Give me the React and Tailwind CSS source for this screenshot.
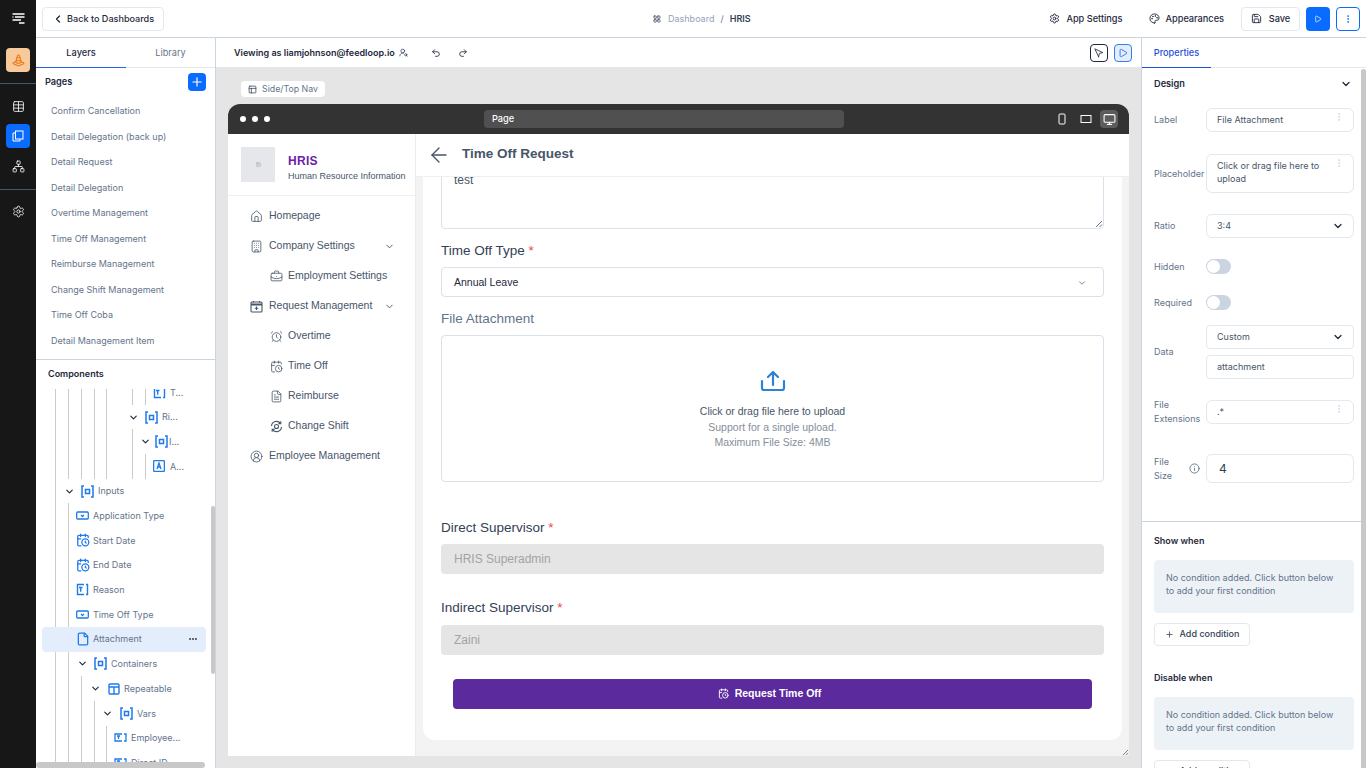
import React from 'react';
import { ChevronLeft, ChevronDown, Plus, Table, Network, Settings, Save, Play, EllipsisVertical, Ellipsis, Palette, UserRoundSearch, Undo2, Redo2, Navigation, PanelsTopLeft, Monitor, ArrowLeft, House, Building, BriefcaseBusiness, CalendarClock, AlarmClock, FileText, CircleUserRound, Info, LayoutGrid, TrafficCone, File, Image } from 'lucide-react';

const pages = ['Confirm Cancellation','Detail Delegation (back up)','Detail Request','Detail Delegation','Overtime Management','Time Off Management','Reimburse Management','Change Shift Management','Time Off Coba','Detail Management Item'];

const B = '#1f7aec';
function Bracket() {
  return <svg width="13" height="13" viewBox="0 0 13 13" fill="none" stroke={B} strokeWidth="1.5"><path d="M3 1H1v11h2M10 1h2v11h-2"/><rect x="4.5" y="4.5" width="4" height="4"/></svg>;
}
function SelectI() {
  return <svg width="13" height="13" viewBox="0 0 13 13" fill="none" stroke={B} strokeWidth="1.3"><rect x="0.7" y="3" width="11.6" height="7" rx="1"/><path d="M5 6l1.5 1.5L8 6"/></svg>;
}
function TextI() {
  return <svg width="13" height="13" viewBox="0 0 13 13" fill="none" stroke={B} strokeWidth="1.4"><path d="M8 1.5H1.5v10H8M10 1.5h1.5v10H10"/><path d="M3 4.5h3.5M4.7 4.5v4.2"/></svg>;
}
function TextW() {
  return <svg width="13" height="13" viewBox="0 0 13 13" fill="none" stroke={B} strokeWidth="1.3"><path d="M8 3H1v7h7M10 3h2v7h-2"/><path d="M3 5h3M4.5 5v3"/></svg>;
}
function AI() {
  return <svg width="12" height="12" viewBox="0 0 12 12" fill="none" stroke={B} strokeWidth="1.3"><rect x="0.6" y="0.6" width="10.8" height="10.8" rx="1"/><path d="M4 9l2-6 2 6M4.8 7h2.4"/></svg>;
}
function Repeat() {
  return <svg width="12" height="12" viewBox="0 0 12 12" fill="none" stroke={B} strokeWidth="1.4"><rect x="1" y="1" width="10" height="10" rx="1"/><path d="M1 4h10M6 4v7"/></svg>;
}
const Cal = () => <CalendarClock size={14} color={B} strokeWidth={2.2} />;
const Fi = () => <File size={14} color={B} strokeWidth={2.2} />;

function ReqIcon({ size = 13 }) {
  return <svg width={size} height={size} viewBox="0 0 13 13" fill="none" stroke="#475569" strokeWidth="1.1"><rect x="1" y="2" width="11" height="10" rx="1"/><path d="M1 4.5h11" strokeWidth="2"/><path d="M3.5 1v1.5M9.5 1v1.5M6.5 6.5v3.5M4.8 8.3h3.4"/></svg>;
}
function ShiftIcon({ size = 13 }) {
  return <svg width={size} height={size} viewBox="0 0 13 13" fill="none" stroke="#475569" strokeWidth="1.1"><path d="M1.5 6A5 5 0 0 1 10.5 3.4M11.5 7A5 5 0 0 1 2.5 9.6"/><path d="M10.8 1.2v2.4H8.4M2.2 11.8V9.4h2.4"/><circle cx="6.5" cy="6.5" r="2"/></svg>;
}

const G0 = [55,68,81,94,106];
const tree = [
  { g:[...G0,132,145], ix:153, tx:170, Icon:TextI, t:'T...' },
  { g:G0, cx:133, ix:145, tx:162, Icon:Bracket, t:'Ri...' },
  { g:[...G0,132], cx:145, ix:155, tx:169, Icon:Bracket, t:'I...' },
  { g:[...G0,132,145], ix:153, tx:170, Icon:AI, t:'A...' },
  { g:[55], cx:69, ix:81, tx:98, Icon:Bracket, t:'Inputs' },
  { g:[55,68], ix:76, tx:93, Icon:SelectI, t:'Application Type' },
  { g:[55,68], ix:76, tx:93, Icon:Cal, t:'Start Date' },
  { g:[55,68], ix:76, tx:93, Icon:Cal, t:'End Date' },
  { g:[55,68], ix:76, tx:93, Icon:TextI, t:'Reason' },
  { g:[55,68], ix:76, tx:93, Icon:SelectI, t:'Time Off Type' },
  { g:[55,68], ix:76, tx:93, Icon:Fi, t:'Attachment', active:true },
  { g:[55,68], cx:82, ix:94, tx:111, Icon:Bracket, t:'Containers' },
  { g:[55,68,81], cx:95, ix:108, tx:124, Icon:Repeat, t:'Repeatable' },
  { g:[55,68,81,94], cx:107, ix:120, tx:137, Icon:Bracket, t:'Vars' },
  { g:G0, ix:114, tx:131, Icon:TextW, t:'Employee...' },
  { g:G0, ix:114, tx:131, Icon:TextW, t:'Direct ID' },
];

function TreeRow({ r }) {
  const X0 = 36;
  return (
    <div className="relative h-[24.7px] flex items-center shrink-0">
      {r.g.map(x => <span key={x} className="absolute top-0 bottom-0 w-px bg-[#cbcbcb]" style={{ left: x - X0 }} />)}
      {r.active && (
        <div className="absolute left-[6px] right-[9px] top-0 h-[25px] rounded bg-[#e3edfb] flex items-center justify-end pr-2">
          <Ellipsis size={10} color="#334155" strokeWidth={3} />
        </div>
      )}
      {r.cx && <span className="absolute" style={{ left: r.cx - X0 - 5 }}><ChevronDown size={11} color="#1e293b" strokeWidth={2.5} /></span>}
      <span className="absolute flex" style={{ left: r.ix - X0 }}><r.Icon /></span>
      <span className="absolute text-[9px] text-[#64748b] whitespace-nowrap" style={{ left: r.tx - X0 }}>{r.t}</span>
    </div>
  );
}

function LeftPanel() {
  return (
    <aside className="w-[180px] shrink-0 border-r border-[#cbd5e1] flex flex-col relative overflow-hidden">
      <div className="h-[30px] flex border-b border-[#e2e8f0] text-[9.2px] shrink-0">
        <div className="w-[90px] -mb-px border-b border-[#2563eb] flex items-center justify-center text-[#1e293b] font-medium">Layers</div>
        <div className="flex-1 flex items-center justify-center text-[#64748b]">Library</div>
      </div>
      <div className="flex items-center justify-between pl-[9px] pr-[9px] pt-[5px] shrink-0">
        <span className="text-[9.2px] font-semibold text-[#1e293b]">Pages</span>
        <span className="w-[18px] h-[18px] bg-[#0a6cff] rounded flex items-center justify-center"><Plus size={14} color="white" /></span>
      </div>
      <div className="pl-[15px] pt-[7px] h-[269px] border-b border-[#cbd5e1] shrink-0 box-border">
        {pages.map(p => <div key={p} className="h-[25.55px] flex items-center text-[9px] text-[#64748b] whitespace-nowrap">{p}</div>)}
      </div>
      <div className="pl-3 pt-[7px] text-[9px] font-semibold text-[#1e293b] shrink-0 h-[29px]">Components</div>
      <div className="flex flex-col flex-1 overflow-hidden">
        <div className="flex flex-col -mt-[9px]">
          {tree.map(r => <TreeRow key={r.t} r={r} />)}
        </div>
      </div>
      <span className="absolute right-0 top-[468px] w-[4px] h-[168px] bg-[#c8c8c8] rounded" />
      <span className="absolute left-0 bottom-0 w-[169px] h-[6px] bg-[#c8c8c8] rounded" />
    </aside>
  );
}

function NavRow({ Icon, t, sub, chev }) {
  return (
    <div className={`h-[30px] flex items-center text-[#475569] text-[10.5px] whitespace-nowrap ${sub ? 'pl-[42px]' : 'pl-[22px]'}`}>
      <Icon size={13} strokeWidth={1.5} color="#475569" />
      <span className={sub ? 'ml-[5px]' : 'ml-[6px]'}>{t}</span>
      {chev && <span className="ml-auto mr-[20px]"><ChevronDown size={11} color="#475569" /></span>}
    </div>
  );
}

function FieldLabel({ children, req }) {
  return <div className="text-[13.5px] text-[#334155] leading-[18px] pt-px -mb-px">{children}{req && <span className="text-[#ef4444]"> *</span>}</div>;
}

function Preview() {
  return (
    <div className="ml-3 mt-[7px] w-[901px] h-[652px] rounded-t-xl overflow-hidden flex flex-col bg-[#f3f3f3] relative font-['Liberation_Sans',sans-serif]">
      <div className="h-[30px] bg-[#333333] flex items-center shrink-0 pl-3 pr-[11px]">
        <div className="flex gap-[6px]">
          <span className="w-[6px] h-[6px] rounded-full bg-white" />
          <span className="w-[6px] h-[6px] rounded-full bg-white" />
          <span className="w-[6px] h-[6px] rounded-full bg-white" />
        </div>
        <div className="ml-[214px] w-[360px] h-[18px] rounded bg-[#505050] text-white text-[9.2px] font-medium flex items-center pl-2 font-['Inter',sans-serif]">Page</div>
        <div className="ml-auto flex items-center text-white">
          <svg width="12" height="12" viewBox="0 0 12 12" fill="none" stroke="white" className="mr-[12px]"><rect x="3" y="1" width="6" height="10" rx="1"/></svg>
          <svg width="12" height="12" viewBox="0 0 12 12" fill="none" stroke="white" className="mr-[8px]"><rect x="1" y="2.5" width="10" height="7"/></svg>
          <span className="w-[18px] h-[18px] rounded bg-[#5c5c5c] flex items-center justify-center"><Monitor size={13} color="white" /></span>
        </div>
      </div>
      <div className="flex flex-1 min-h-0">
        <div className="w-[188px] bg-white border-r border-[#ececec] shrink-0">
          <div className="h-[62px] border-b border-[#f0f0f0] flex items-center pl-[13px]">
            <div className="w-[34px] h-[35px] shrink-0 bg-[#e5e7eb] flex items-center justify-center"><Image size={5} color="#94a3b8" /></div>
            <div className="ml-[13px] pt-[6px]">
              <div className="text-[12px] font-bold text-[#6b21a8] leading-4 tracking-wide">HRIS</div>
              <div className="text-[9px] text-[#475569] leading-[14px] whitespace-nowrap">Human Resource Information</div>
            </div>
          </div>
          <div className="pt-[5px]">
            <NavRow Icon={House} t="Homepage" />
            <NavRow Icon={Building} t="Company Settings" chev />
            <NavRow Icon={BriefcaseBusiness} t="Employment Settings" sub />
            <NavRow Icon={ReqIcon} t="Request Management" chev />
            <NavRow Icon={AlarmClock} t="Overtime" sub />
            <NavRow Icon={CalendarClock} t="Time Off" sub />
            <NavRow Icon={FileText} t="Reimburse" sub />
            <NavRow Icon={ShiftIcon} t="Change Shift" sub />
            <NavRow Icon={CircleUserRound} t="Employee Management" />
          </div>
        </div>
        <div className="flex-1 flex flex-col min-w-0">
          <div className="h-[43px] bg-white border-b border-[#efefef] flex items-center pl-[11px] pb-[1px] shrink-0">
            <ArrowLeft size={24} color="#475569" strokeWidth={1.4} />
            <span className="ml-[11px] text-[13.5px] font-bold text-[#475569]">Time Off Request</span>
          </div>
          <div className="mx-[7px] bg-white rounded-b-xl h-[563px] overflow-hidden px-[18px] flex flex-col">
            <div className="-mt-[10px] h-[62px] border border-[#dbe1e8] rounded pl-3 pt-[5px] relative shrink-0">
              <div className="text-[12px] text-[#475569] leading-[16px] -mt-[1px]">test</div>
              <svg className="absolute right-0 bottom-0" width="8" height="8" viewBox="0 0 8 8" stroke="#64748b"><path d="M1 7l6-6M4.5 7L7 4.5"/></svg>
            </div>
            <div className="mt-[12px]"><FieldLabel req>Time Off Type</FieldLabel></div>
            <div className="mt-[8px] h-[30px] pt-px border border-[#dbe1e8] rounded flex items-center pl-3 pr-[16px] text-[10.5px] text-[#1e293b] shrink-0">
              Annual Leave<span className="ml-auto"><ChevronDown size={10} color="#64748b" /></span>
            </div>
            <div className="mt-[13px] -mb-px text-[13.5px] text-[#64748b] leading-[18px]">File Attachment</div>
            <div className="mt-[8px] h-[147px] border border-[#dbe1e8] rounded flex flex-col items-center pt-[34px] text-[10.5px] leading-[15.5px] text-[#868e9a] shrink-0">
              <svg width="26" height="22" viewBox="0 0 26 22" fill="none" stroke="#2f80d8" strokeWidth="2.2" strokeLinecap="round" strokeLinejoin="round">
                <path d="M2 11v7q0 2 2 2h18q2 0 2-2v-7M13 15V2M8 7l5-5 5 5" />
              </svg>
              <div className="mt-[12px] text-[#475569]">Click or drag file here to upload</div>
              <div>Support for a single upload.</div>
              <div>Maximum File Size: 4MB</div>
            </div>
            <div className="mt-[36px]"><FieldLabel req>Direct Supervisor</FieldLabel></div>
            <div className="mt-[8px] h-[30px] rounded bg-[#e5e5e5] flex items-center pl-[13px] text-[12px] text-[#a3a3a3] shrink-0">HRIS Superadmin</div>
            <div className="mt-[24px]"><FieldLabel req>Indirect Supervisor</FieldLabel></div>
            <div className="mt-[9px] h-[30px] rounded bg-[#e5e5e5] flex items-center pl-[13px] text-[12px] text-[#a3a3a3] shrink-0">Zaini</div>
            <div className="mt-[24px] mx-3 h-[30px] pb-px pr-[6px] rounded bg-[#5b2a9d] flex items-center justify-center text-white text-[10.5px] font-bold shrink-0">
              <CalendarClock size={11} color="white" className="mr-[6px]" />Request Time Off
            </div>
          </div>
        </div>
      </div>
      <svg className="absolute right-0 bottom-0" width="7" height="7" viewBox="0 0 8 8" stroke="#64748b"><path d="M1 7l6-6M4.5 7L7 4.5"/></svg>
    </div>
  );
}

function Center() {
  return (
    <main className="flex-1 min-w-0 flex flex-col bg-[#e5e5e5]">
      <div className="h-[30px] bg-white border-b border-[#e2e8f0] flex items-center pl-[18px] pr-[9px] shrink-0">
        <span className="text-[9px] font-semibold text-[#1e293b]">Viewing as liamjohnson@feedloop.io</span>
        <UserRoundSearch size={9} color="#334155" className="ml-[4px]" />
        <Undo2 size={10} color="#1e293b" className="ml-[23px]" />
        <Redo2 size={10} color="#1e293b" className="ml-[17px]" />
        <span className="ml-auto w-[18px] h-[18px] rounded border border-[#1e293b] flex items-center justify-center"><Navigation size={10} color="#1e293b" className="-rotate-90" /></span>
        <span className="ml-[6px] w-[18px] h-[18px] rounded border border-[#2f80ed] bg-[#e3edfb] flex items-center justify-center"><Play size={10} color="#2563eb" /></span>
      </div>
      <div className="pl-[25px] pt-[13px]">
        <div className="w-[84px] h-[16px] bg-white rounded flex items-center pl-[7px] text-[8.8px] text-[#64748b]"><PanelsTopLeft size={9} color="#334155" className="mr-[5px]" />Side/Top Nav</div>
      </div>
      <Preview />
    </main>
  );
}

function Row({ label, children, cls = '' }) {
  return <div className={`flex items-center ${cls}`}><div className="w-[52px] shrink-0 text-[9px] leading-[14px] text-[#64748b]">{label}</div><div className="flex-1 min-w-0">{children}</div></div>;
}
const Box = ({ children, h = 'h-[24px]', menu, chev, r = 'rounded-md', cls = 'pb-px' }) => (
  <div className={`${h} ${r} ${cls} border border-[#e2e8f0] flex items-center pl-[10px] pr-[9px] text-[9px] leading-[13px] text-[#475569]`}>
    <span>{children}</span>
    {menu && <span className="ml-auto self-start mt-[3px] text-[#cbd5e1]"><EllipsisVertical size={10} color="#cbd5e1" /></span>}
    {chev && <span className="ml-auto"><ChevronDown size={12} color="#1e293b" strokeWidth={2.5} /></span>}
  </div>
);
const Toggle = () => <div className="w-[25px] h-[15px] rounded-full bg-[#cbd5e1] p-px"><div className="w-[13px] h-[13px] rounded-full bg-white" /></div>;
const Cond = () => <div className="h-[53px] bg-[#edf2f7] rounded px-3 pb-[5px] flex items-center text-[9px] leading-[13.5px] text-[#64748b]">No condition added. Click button below to add your first condition</div>;
const Add = () => <div className="w-[96px] h-[23px] pb-px border border-[#e2e8f0] rounded flex items-center justify-center text-[9px] font-medium text-[#334155] shrink-0"><Plus size={9} color="#334155" className="mr-[6px]" />Add condition</div>;

function RightPanel() {
  return (
    <aside className="w-[225px] shrink-0 border-l border-[#cbd5e1] flex flex-col relative overflow-hidden">
      <div className="h-[30px] border-b border-[#e2e8f0] shrink-0 flex">
        <div className="w-[69px] -mb-px border-b border-[#1d4ed8] flex items-center justify-center text-[9.2px] font-medium text-[#1d4ed8]">Properties</div>
      </div>
      <div className="pl-[12px] pr-[12px] pt-[9px] w-[224px]">
        <div className="flex items-center justify-between h-[14px] pr-[2px]">
          <span className="text-[9.2px] font-semibold text-[#1e293b]">Design</span>
          <ChevronDown size={12} color="#1e293b" strokeWidth={2.5} />
        </div>
        <Row label="Label" cls="mt-[17px]"><Box menu>File Attachment</Box></Row>
        <Row label="Placeholder" cls="mt-[22px]"><Box h="h-[39px]" cls="pb-[4px]" menu>Click or drag file here to<br />upload</Box></Row>
        <Row label="Ratio" cls="mt-[21px]"><Box chev>3:4</Box></Row>
        <Row label="Hidden" cls="mt-[21px]"><Toggle /></Row>
        <Row label="Required" cls="mt-[21px]"><Toggle /></Row>
        <Row label="Data" cls="mt-[15px]">
          <Box r="rounded-sm" chev>Custom</Box>
          <div className="mt-[6px]"><Box r="rounded-sm">attachment</Box></div>
        </Row>
        <Row label={<>File<br />Extensions</>} cls="mt-[19px]"><Box menu>.*</Box></Row>
        <div className="mt-[28px] flex items-center">
          <div className="w-[35px] text-[9px] leading-[14px] text-[#64748b]">File<br />Size</div>
          <Info size={11} color="#64748b" className="mr-[6px]" />
          <div className="flex-1 h-[29px] border border-[#e2e8f0] rounded-md flex items-center pl-[12px] text-[12px] text-[#334155]">4</div>
        </div>
      </div>
      <div className="mt-[38px] border-t border-[#cbd5e1] pl-3 pr-[12px] w-[224px] flex flex-col">
        <div className="mt-[13px] text-[9px] font-semibold text-[#1e293b] leading-[12px]">Show when</div>
        <div className="mt-[13px]"><Cond /></div>
        <div className="mt-[10px]"><Add /></div>
        <div className="mt-[26px] text-[9px] font-semibold text-[#1e293b] leading-[12px]">Disable when</div>
        <div className="mt-[13px]"><Cond /></div>
        <div className="mt-[10px]"><Add /></div>
      </div>
      <span className="absolute right-0 top-[31px] bottom-0 w-[5px] bg-[#c8c8c8] rounded-t" />
    </aside>
  );
}

export default function App() {
  return (
    <div className="flex h-[768px] w-[1366px] overflow-hidden bg-white font-['Inter',sans-serif]">
      <nav className="w-[36px] shrink-0 bg-[#171717] flex flex-col items-center">
        <div className="h-[36px] flex items-center justify-center">
          <svg width="13" height="13" viewBox="0 0 13 13" stroke="white" strokeWidth="1.3"><path d="M0.5 2h12M3 5h9.5M0.5 5h1M0.5 8h8.5M7 11h5.5"/></svg>
        </div>
        <div className="mt-[12px] w-[24px] h-[24px] rounded bg-[#f8c99b] flex items-center justify-center"><TrafficCone size={13} color="#ea7a1a" /></div>
        <div className="mt-[11px] w-full h-px bg-[#475569]" />
        <div className="mt-[16px]"><Table size={13} color="white" strokeWidth={1.5} /></div>
        <div className="mt-[11px] w-[24px] h-[24px] rounded bg-[#0a6cff] flex items-center justify-center">
          <svg width="12" height="12" viewBox="0 0 12 12" fill="none" stroke="white" strokeWidth="1"><rect x="3.5" y="1" width="7.5" height="8"/><path d="M3.5 3H1v8h7V9"/></svg>
        </div>
        <div className="mt-[12px]"><Network size={13} color="white" strokeWidth={1.5} /></div>
        <div className="mt-[16px] w-full h-px bg-[#475569]" />
        <div className="mt-[15px]"><Settings size={13} color="white" strokeWidth={1.5} /></div>
      </nav>
      <div className="flex-1 min-w-0 flex flex-col">
        <header className="h-[38px] border-b border-[#cbd5e1] flex items-center pl-[6px] pr-[6px] shrink-0">
          <div className="w-[122px] h-[24px] border border-[#e2e8f0] rounded flex items-center pl-[9px] text-[9.1px] font-medium text-[#1e293b] whitespace-nowrap">
            <ChevronLeft size={12} color="#1e293b" strokeWidth={2.5} className="mr-[3px]" />Back to Dashboards
          </div>
          <div className="ml-[489px] flex items-center text-[9px]">
            <LayoutGrid size={8} color="#475569" strokeWidth={2.5} />
            <span className="ml-[7px] text-[#94a3b8]">Dashboard</span>
            <span className="mx-[6px] text-[#64748b]">/</span>
            <span className="font-semibold text-[#334155]">HRIS</span>
          </div>
          <div className="ml-auto flex items-center text-[9.2px] font-medium text-[#1e293b]">
            <Settings size={11} color="#1e293b" className="mr-[6px]" />App Settings
            <Palette size={11} color="#1e293b" className="ml-[26px] mr-[6px]" />Appearances
            <div className="ml-[17px] w-[59px] h-[24px] border border-[#e2e8f0] rounded flex items-center justify-center"><Save size={11} color="#1e293b" className="mr-[7px]" />Save</div>
            <div className="ml-[6px] w-[24px] h-[24px] rounded bg-[#0a6cff] flex items-center justify-center"><Play size={8} color="white" /></div>
            <div className="ml-[6px] w-[24px] h-[24px] rounded border border-[#0a6cff] flex items-center justify-center"><EllipsisVertical size={10} color="#0a6cff" /></div>
          </div>
        </header>
        <div className="flex flex-1 min-h-0">
          <LeftPanel />
          <Center />
          <RightPanel />
        </div>
      </div>
    </div>
  );
}
